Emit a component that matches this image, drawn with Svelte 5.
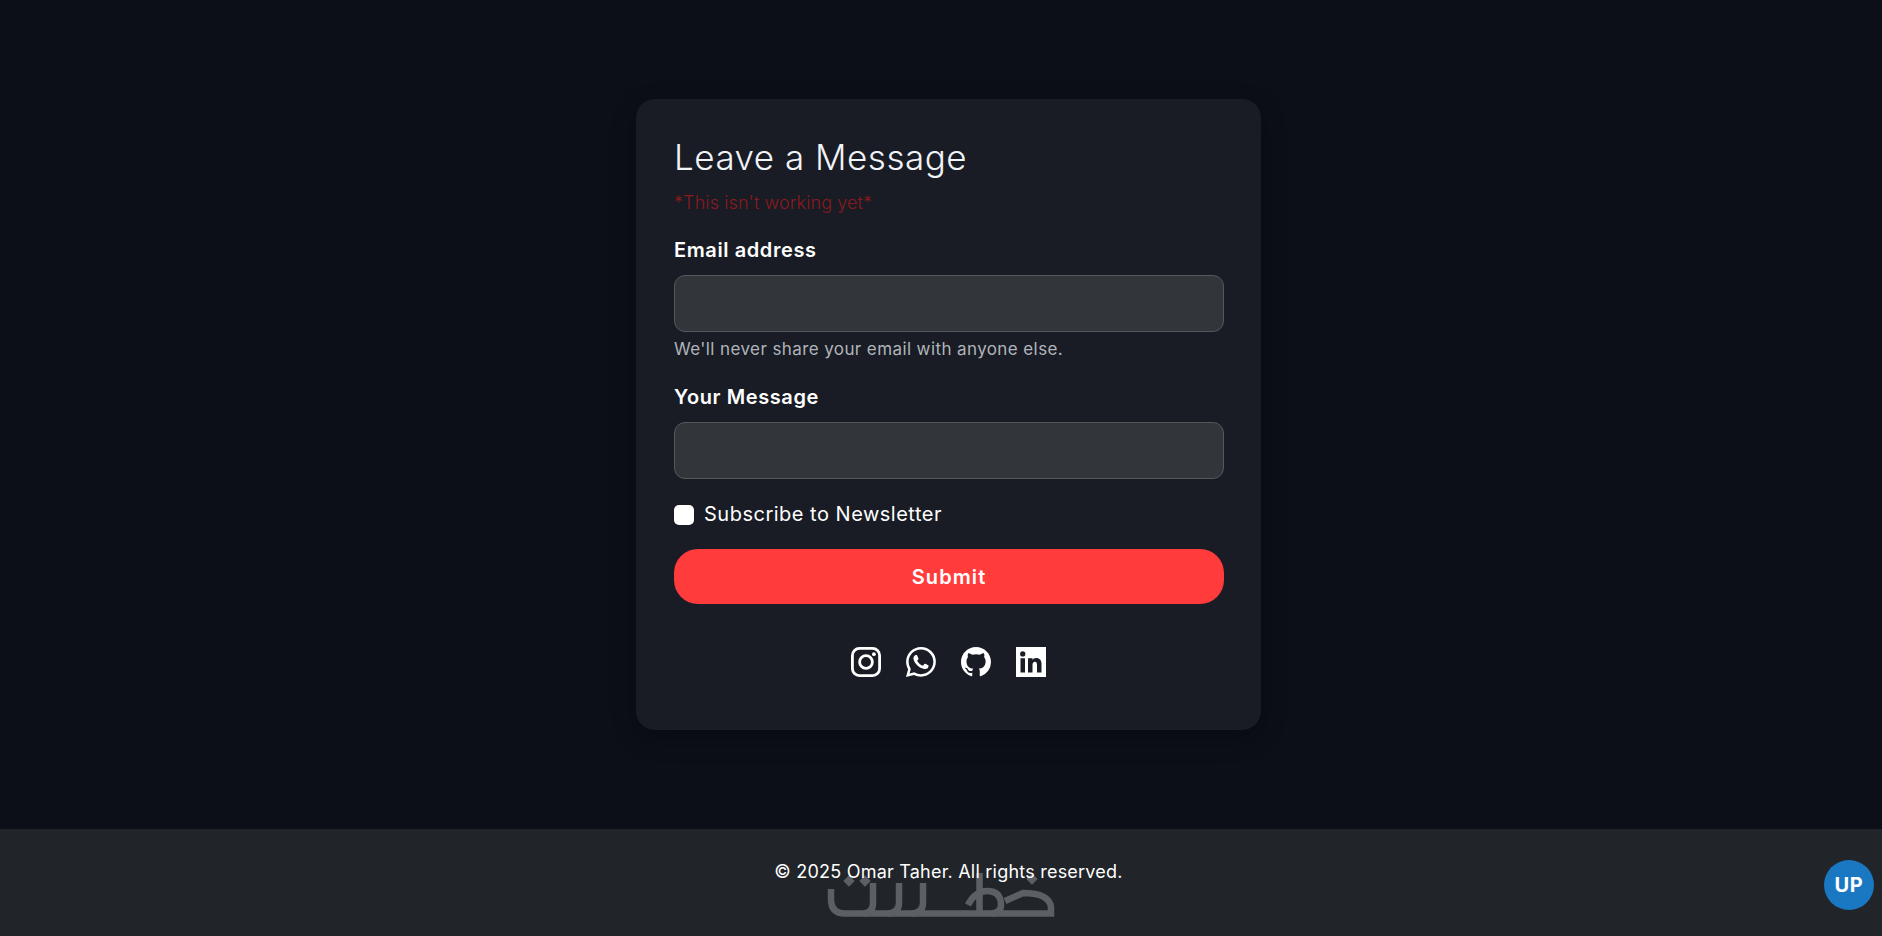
<script>
  let email = $state("");
  let message = $state("");
  let subscribed = $state(false);
</script>

<div class="page">
  <main class="content">
    <form class="card" onsubmit={(e) => e.preventDefault()}>
      <h2>Leave a Message</h2>
      <p class="warning">*This isn't working yet*</p>

      <label class="label" for="email">Email address</label>
      <input id="email" type="email" bind:value={email} />
      <small>We'll never share your email with anyone else.</small>

      <label class="label second" for="message">Your Message</label>
      <input id="message" type="text" bind:value={message} />

      <label class="check">
        <input type="checkbox" bind:checked={subscribed} />
        <span>Subscribe to Newsletter</span>
      </label>

      <button class="submit" type="submit">Submit</button>

      <div class="socials">
        <!-- instagram -->
        <svg viewBox="0 0 32 32" fill="none" stroke="#fff" stroke-width="3">
          <rect x="1.5" y="1.5" width="29" height="29" rx="7.5" />
          <circle cx="16" cy="16" r="6.8" />
          <circle cx="24.4" cy="7.6" r="2" fill="#fff" stroke="none" />
        </svg>
        <!-- whatsapp -->
        <svg viewBox="0 0 16 16" fill="#fff">
          <path d="M13.601 2.326A7.854 7.854 0 0 0 7.994 0C3.627 0 .068 3.558.064 7.926c0 1.399.366 2.76 1.057 3.965L0 16l4.204-1.102a7.933 7.933 0 0 0 3.79.965h.004c4.368 0 7.926-3.558 7.93-7.93A7.898 7.898 0 0 0 13.6 2.326zM7.994 14.521a6.573 6.573 0 0 1-3.356-.92l-.24-.144-2.494.654.666-2.433-.156-.251a6.56 6.56 0 0 1-1.007-3.505c0-3.626 2.957-6.584 6.591-6.584a6.56 6.56 0 0 1 4.66 1.931 6.557 6.557 0 0 1 1.928 4.66c-.004 3.639-2.961 6.592-6.592 6.592zm3.615-4.934c-.197-.099-1.17-.578-1.353-.646-.182-.065-.315-.099-.445.099-.133.197-.513.646-.627.775-.114.133-.232.148-.43.05-.197-.1-.836-.308-1.592-.985-.59-.525-.985-1.175-1.103-1.372-.114-.198-.011-.304.088-.403.087-.088.197-.232.296-.346.1-.114.133-.198.198-.33.065-.134.034-.248-.015-.347-.05-.099-.445-1.076-.612-1.47-.16-.389-.323-.335-.445-.34-.114-.007-.247-.007-.38-.007a.729.729 0 0 0-.529.247c-.182.198-.691.677-.691 1.654 0 .977.71 1.916.81 2.049.098.133 1.394 2.132 3.383 2.992.47.205.84.326 1.129.418.475.152.904.129 1.246.08.38-.058 1.171-.48 1.338-.943.164-.464.164-.86.114-.943-.049-.084-.182-.133-.38-.232z" />
        </svg>
        <!-- github -->
        <svg viewBox="0 0 16 16" fill="#fff">
          <path d="M8 0C3.58 0 0 3.58 0 8c0 3.54 2.29 6.53 5.47 7.59.4.07.55-.17.55-.38 0-.19-.01-.82-.01-1.49-2.01.37-2.53-.49-2.69-.94-.09-.23-.48-.94-.82-1.13-.28-.15-.68-.52-.01-.53.63-.01 1.08.58 1.23.82.72 1.21 1.87.87 2.33.66.07-.52.28-.87.51-1.07-1.78-.2-3.64-.89-3.64-3.95 0-.87.31-1.59.82-2.15-.08-.2-.36-1.02.08-2.12 0 0 .67-.21 2.2.82.64-.18 1.32-.27 2-.27.68 0 1.36.09 2 .27 1.53-1.04 2.2-.82 2.2-.82.44 1.1.16 1.92.08 2.12.51.56.82 1.27.82 2.15 0 3.07-1.87 3.75-3.65 3.95.29.25.54.73.54 1.48 0 1.07-.01 1.93-.01 2.2 0 .21.15.46.55.38A8.012 8.012 0 0 0 16 8c0-4.42-3.58-8-8-8z" />
        </svg>
        <!-- linkedin -->
        <svg viewBox="0 0 16 16" fill="#fff">
          <path fill-rule="evenodd" d="M0 0h16v16H0zM2.4 6v7.6h2.4V6zM3.6 2.3a1.4 1.4 0 1 0 0 2.8 1.4 1.4 0 0 0 0-2.8zM6.4 6v7.6h2.4V9.6c0-1.1.4-1.8 1.3-1.8s1.1.7 1.1 1.8v4h2.4V9.1c0-2.1-1-3.3-2.8-3.3-1 0-1.7.5-2 1.1V6z" />
        </svg>
      </div>
    </form>
  </main>

  <footer>
    <svg class="logo" viewBox="0 0 228 48" fill="none" stroke="#5c6064" stroke-width="6.5">
      <path d="M4 18V28Q4 42.5 18 42.5H224V36Q222 22 196 22L178 30" />
      <path d="M46 12V32Q46 42.5 36 42.5M72 12V32Q72 42.5 60 42.5M96 12V32Q96 42.5 84 42.5" />
      <path d="M152.5 2V45M141 34Q148 20 160 20Q174 20 174 34Q174 42 164 42.5" />
      <g fill="#5c6064" stroke="none">
        <rect x="18" y="6" width="8" height="8" transform="rotate(45 22 10)" />
        <rect x="34" y="6" width="8" height="8" transform="rotate(45 38 10)" />
        <rect x="201" y="4" width="8" height="8" transform="rotate(45 205 8)" />
      </g>
    </svg>
    <p>© 2025 Omar Taher. All rights reserved.</p>
    <button class="up" type="button">UP</button>
  </footer>
</div>

<style>
  :global(body) {
    background: #0c0f18;
    font-family: "Inter", "Liberation Sans", sans-serif;
    color: #fff;
  }
  .page {
    height: 936px;
    display: flex;
    flex-direction: column;
    overflow: hidden;
  }
  .content {
    flex: 1;
    display: flex;
    justify-content: center;
    align-items: flex-start;
    padding: 99px 0 0 15px;
  }
  .card {
    width: 625px;
    height: 631px;
    box-sizing: border-box;
    padding: 37px 37px 0 38px;
    background: #191c24;
    border-radius: 19px;
    box-shadow: 0 8px 24px rgba(0, 0, 0, 0.3);
    display: flex;
    flex-direction: column;
  }
  h2 {
    margin: 0;
    font-size: 35px;
    font-weight: 300;
    line-height: 42px;
    letter-spacing: 0.5px;
    color: #f0f3f7;
  }
  .warning {
    margin: 11px 0 0;
    font-size: 18px;
    line-height: 27px;
    font-weight: 300;
    letter-spacing: 0.1px;
    color: #8a1a1f;
  }
  .label {
    margin-top: 20px;
    font-size: 20px;
    line-height: 29px;
    font-weight: 600;
    letter-spacing: 0.6px;
    margin-bottom: 10px;
  }
  .label.second {
    margin-top: 22px;
  }
  input[type="email"],
  input[type="text"] {
    height: 57px;
    box-sizing: border-box;
    background: #32353a;
    border: 1px solid #54575b;
    border-radius: 11px;
    color: #fff;
    outline: none;
  }
  small {
    margin-top: 5px;
    font-size: 17px;
    line-height: 24px;
    letter-spacing: 0.4px;
    color: #b0b4ba;
    font-weight: 400;
  }
  .check {
    margin-top: 21px;
    display: flex;
    align-items: center;
    gap: 10px;
    font-size: 20px;
    line-height: 29px;
    letter-spacing: 0.5px;
    font-weight: 400;
  }
  .check input {
    appearance: none;
    margin: 0;
    width: 20px;
    height: 20px;
    background: #fff;
    border-radius: 5px;
  }
  .submit {
    margin-top: 20px;
    height: 55px;
    border: none;
    border-radius: 24px;
    background: #ff3b3b;
    color: #fff;
    font: 600 20px "Inter", "Liberation Sans", sans-serif;
    letter-spacing: 1.1px;
  }
  .socials {
    margin: 43px 2px 0 0;
    display: flex;
    justify-content: center;
    gap: 25px;
  }
  .socials svg {
    width: 30px;
    height: 30px;
  }
  footer {
    height: 107px;
    background: #212429;
    position: relative;
    display: flex;
    flex-direction: column;
    align-items: center;
  }
  footer p {
    margin: 29px 0 0;
    padding-left: 15px;
    font-size: 18px;
    line-height: 27px;
    letter-spacing: 0.22px;
    position: relative;
  }
  .logo {
    position: absolute;
    left: 827px;
    top: 42px;
    width: 228px;
    height: 48px;
  }
  .up {
    position: absolute;
    right: 8px;
    top: 31px;
    width: 50px;
    height: 50px;
    border: none;
    border-radius: 50%;
    background: #1a78c2;
    color: #fff;
    font: 700 20px "Inter", "Liberation Sans", sans-serif;
    letter-spacing: 0.8px;
    padding: 0;
  }
</style>
